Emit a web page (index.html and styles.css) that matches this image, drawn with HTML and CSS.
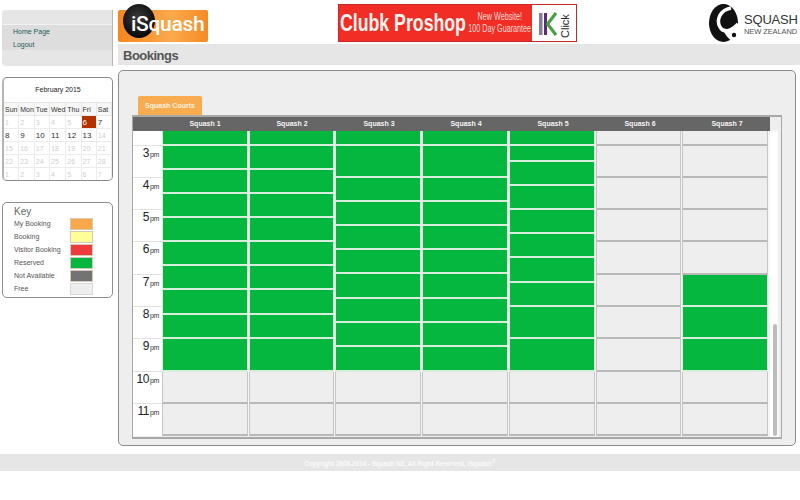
FILE: index.html
```html
<!DOCTYPE html>
<html lang="en">
<head>
<meta charset="utf-8">
<title>Bookings</title>
<link rel="stylesheet" href="styles.css">
</head>
<body>
<div class="layout">
  <aside class="sidebar">
    <nav class="nav">
      <div class="nav-links">
        <a class="nav-link" href="#">Home Page</a>
        <a class="nav-link" href="#">Logout</a>
      </div>
    </nav>
    <section class="calendar">
      <div class="cal-title">February 2015</div>
      <div class="cal-grid">
        <div class="cal-head">Sun</div><div class="cal-head">Mon</div><div class="cal-head">Tue</div><div class="cal-head">Wed</div><div class="cal-head">Thu</div><div class="cal-head">Fri</div><div class="cal-head">Sat</div>
        <div class="day off">1</div><div class="day off">2</div><div class="day off">3</div><div class="day off">4</div><div class="day off">5</div><div class="day today">6</div><div class="day">7</div>
        <div class="day">8</div><div class="day">9</div><div class="day">10</div><div class="day">11</div><div class="day">12</div><div class="day">13</div><div class="day off">14</div>
        <div class="day off">15</div><div class="day off">16</div><div class="day off">17</div><div class="day off">18</div><div class="day off">19</div><div class="day off">20</div><div class="day off">21</div>
        <div class="day off">22</div><div class="day off">23</div><div class="day off">24</div><div class="day off">25</div><div class="day off">26</div><div class="day off">27</div><div class="day off">28</div>
        <div class="day off">1</div><div class="day off">2</div><div class="day off">3</div><div class="day off">4</div><div class="day off">5</div><div class="day off">6</div><div class="day off">7</div>
      </div>
    </section>
    <section class="key">
      <h2 class="key-title">Key</h2>
      <div class="key-row"><span>My Booking</span><i class="swatch s-mine"></i></div>
      <div class="key-row"><span>Booking</span><i class="swatch s-booking"></i></div>
      <div class="key-row"><span>Visitor Booking</span><i class="swatch s-visitor"></i></div>
      <div class="key-row"><span>Reserved</span><i class="swatch s-reserved"></i></div>
      <div class="key-row"><span>Not Available</span><i class="swatch s-na"></i></div>
      <div class="key-row"><span>Free</span><i class="swatch s-free"></i></div>
    </section>
  </aside>

  <main class="content">
    <header class="topbar">
      <div class="isquash"><span class="isquash-ball"></span><span class="isquash-text">iSquash</span></div>
      <div class="banner">
        <div class="banner-name"><span>Clubk Proshop</span></div>
        <div class="banner-note"><span>New Website!</span><span>100 Day Guarantee</span></div>
        <svg class="banner-click" width="44" height="36" viewBox="0 0 44 36">
          <rect x="7" y="8" width="3.500" height="22" fill="#8a7a92"/>
          <rect x="12" y="8" width="3" height="22" fill="#5b2a78"/>
          <path d="M24 8 L15.500 19 L24 30" fill="none" stroke="#3fa33a" stroke-width="3"/>
          <text transform="translate(37 33) rotate(-90)" class="click-text">Click</text>
        </svg>
      </div>
      <div class="sq-logo">
        <svg width="30" height="38" viewBox="0 0 30 38">
          <ellipse cx="14.500" cy="19" rx="14.500" ry="19" fill="#111"/>
          <path d="M29 20 C24 26 18 28 14 26 C17 32 20 35 24 38 L30 38 L30 20 Z" fill="#fff"/>
          <path d="M22 4 C11 6 7 16 11 23 C14 29 22 28 29 20" fill="none" stroke="#fff" stroke-width="3.500"/>
          <circle cx="25" cy="31" r="2.200" fill="#111"/>
        </svg>
        <div class="sq-words"><span class="sq-main">SQUASH</span><span class="sq-sub">NEW ZEALAND</span></div>
      </div>
    </header>
    <h1 class="page-title">Bookings</h1>
    <section class="panel">
      <div class="tab">Squash Courts</div>
      <div class="board">
        <div class="board-head">
          <div class="head-spacer"></div>
          <div class="head-courts">
            <span>Squash 1</span><span>Squash 2</span><span>Squash 3</span><span>Squash 4</span><span>Squash 5</span><span>Squash 6</span><span>Squash 7</span>
          </div>
        </div>
        <div class="board-body">
          <div class="times">
            <div class="time h14"></div>
            <div class="time h32"><b>3</b>pm</div>
            <div class="time h32"><b>4</b>pm</div>
            <div class="time h32"><b>5</b>pm</div>
            <div class="time h33"><b>6</b>pm</div>
            <div class="time h32"><b>7</b>pm</div>
            <div class="time h32"><b>8</b>pm</div>
            <div class="time h33"><b>9</b>pm</div>
            <div class="time h32"><b>10</b>pm</div>
            <div class="time h32"><b>11</b>pm</div>
          </div>
          <div class="courts">
            <div class="court">
              <div class="slot busy h15"></div><div class="slot busy h24"></div><div class="slot busy h24"></div><div class="slot busy h24"></div><div class="slot busy h24"></div><div class="slot busy h24"></div><div class="slot busy h24"></div><div class="slot busy h25"></div><div class="slot busy h24"></div><div class="slot busy h33"></div><div class="slot free h32"></div><div class="slot free h32"></div>
            </div>
            <div class="court">
              <div class="slot busy h15"></div><div class="slot busy h24"></div><div class="slot busy h24"></div><div class="slot busy h24"></div><div class="slot busy h24"></div><div class="slot busy h24"></div><div class="slot busy h24"></div><div class="slot busy h25"></div><div class="slot busy h24"></div><div class="slot busy h33"></div><div class="slot free h32"></div><div class="slot free h32"></div>
            </div>
            <div class="court">
              <div class="slot busy h15"></div><div class="slot busy h32"></div><div class="slot busy h24"></div><div class="slot busy h24"></div><div class="slot busy h24"></div><div class="slot busy h24"></div><div class="slot busy h25"></div><div class="slot busy h24"></div><div class="slot busy h24"></div><div class="slot busy h25"></div><div class="slot free h32"></div><div class="slot free h32"></div>
            </div>
            <div class="court">
              <div class="slot busy h15"></div><div class="slot busy h32"></div><div class="slot busy h24"></div><div class="slot busy h24"></div><div class="slot busy h24"></div><div class="slot busy h24"></div><div class="slot busy h25"></div><div class="slot busy h24"></div><div class="slot busy h24"></div><div class="slot busy h25"></div><div class="slot free h32"></div><div class="slot free h32"></div>
            </div>
            <div class="court">
              <div class="slot busy h15"></div><div class="slot busy h16"></div><div class="slot busy h24"></div><div class="slot busy h24"></div><div class="slot busy h24"></div><div class="slot busy h24"></div><div class="slot busy h25"></div><div class="slot busy h24"></div><div class="slot busy h32"></div><div class="slot busy h33"></div><div class="slot free h32"></div><div class="slot free h32"></div>
            </div>
            <div class="court">
              <div class="slot free h15"></div><div class="slot free h32"></div><div class="slot free h32"></div><div class="slot free h32"></div><div class="slot free h33"></div><div class="slot free h32"></div><div class="slot free h32"></div><div class="slot free h33"></div><div class="slot free h32"></div><div class="slot free h32"></div>
            </div>
            <div class="court">
              <div class="slot free h15"></div><div class="slot free h32"></div><div class="slot free h32"></div><div class="slot free h32"></div><div class="slot free h33"></div><div class="slot busy h32"></div><div class="slot busy h32"></div><div class="slot busy h33"></div><div class="slot free h32"></div><div class="slot free h32"></div>
            </div>
          </div>
          <div class="scroll"><div class="thumb"></div></div>
        </div>
      </div>
    </section>
  </main>
</div>
<footer class="footer">Copyright 2008-2014 - Squash NZ, All Right Reserved, iSquash<sup>®</sup></footer>
</body>
</html>
```
FILE: styles.css
```css
* { box-sizing: border-box; }
html, body { margin: 0; padding: 0; }
body { width: 800px; height: 500px; overflow: hidden; background: #fff; font-family: "Liberation Sans", Arial, sans-serif; color: #333; }

.layout { display: flex; align-items: flex-start; }

/* sidebar */
.sidebar { width: 118px; flex: none; padding: 10px 5px 0 2px; }
.nav { height: 56px; padding-top: 14px; background: #e6e6e6; border-radius: 4px 0 0 4px; border-right: 1px solid #b5b5b5; }
.nav-links { height: 26px; border-top: 1px solid #f2f2f2; background: #dcdddc; padding: 3px 0 0 11px; display: flex; flex-direction: column; gap: 6px; }
.nav-link { font-size: 7px; line-height: 7px; color: #1f5a58; text-decoration: none; height: 7px; }

.calendar { height: 104px; margin-top: 11px; border: 1px solid #8a8a8a; border-left-width: 2px; border-left-color: #b5b5b5; border-radius: 5px; overflow: hidden; background: #fff; }
.cal-title { height: 25px; font-size: 7px; line-height: 24px; text-align: center; color: #222; border-bottom: 1px solid #e4e4e4; }
.cal-grid { display: grid; grid-template-columns: repeat(7, 1fr); grid-auto-rows: 13px; }
.cal-head { font-size: 7px; line-height: 13px; padding-left: 1px; color: #333; background: #f7f7f7; border-right: 1px solid #e6e6e6; border-bottom: 1px solid #e6e6e6; }
.day { font-size: 8px; line-height: 13px; padding-left: 1px; color: #333; border-right: 1px solid #ececec; border-bottom: 1px solid #ececec; }
.day.off { color: #cfcfcf; font-size: 7px; }
.day.today { background: #b43200; color: #fff; }

.key { height: 96px; margin-top: 21px; border: 1px solid #8f8f8f; border-radius: 5px; padding: 3px 19px 0 11px; }
.key-title { margin: 0; font-size: 10px; line-height: 12px; height: 11px; font-weight: normal; color: #666; }
.key-row { display: flex; justify-content: space-between; align-items: center; height: 13px; font-size: 7px; color: #555; }
.swatch { display: block; width: 23px; height: 12px; border: 1px solid #d6c9b5; }
.s-mine { background: #f9a94b; }
.s-booking { background: #ffff99; }
.s-visitor { background: #ee3b3e; }
.s-reserved { background: #06b73f; }
.s-na { background: #737373; }
.s-free { background: #eeeeee; border-color: #d8d8d8; }

/* top */
.content { flex: 1; min-width: 0; }
.topbar { height: 44px; display: flex; align-items: flex-start; }
.isquash { position: relative; width: 90px; height: 32px; margin-top: 10px; border-radius: 2px; background: linear-gradient(90deg, #f5861f 0%, #fba94c 60%, #f58a24 100%); }
.isquash-ball { position: absolute; left: 5px; top: -6px; width: 32px; height: 34px; border-radius: 50%; background: radial-gradient(circle at 45% 40%, #3a3a3a, #0b0b0b 70%); }
.isquash-text { position: absolute; left: 13px; top: 1px; font-family: Roboto, sans-serif; font-size: 21px; font-weight: 500; line-height: 26px; color: #fff; letter-spacing: -0.3px; }
.banner { width: 239px; height: 38px; margin: 4px 0 0 130px; display: flex; align-items: center; background: #f12d26; border: 1px solid #c8262a; }
.banner-name { width: 129px; flex: none; padding-left: 1px; font-weight: bold; font-size: 23px; color: #fdf4ef; white-space: nowrap; }
.banner-name span { display: inline-block; transform: scaleX(0.77); transform-origin: left center; }
.banner-note { width: 64px; flex: none; display: flex; flex-direction: column; align-items: center; font-size: 10px; line-height: 12px; color: #fbdcd3; white-space: nowrap; }
.banner-note span { display: block; transform: scaleX(0.72); }
.banner-click { margin-left: auto; background: #fff; display: block; flex: none; }
.click-text { font-family: "Liberation Sans", sans-serif; font-size: 11px; fill: #222; }
.sq-logo { margin: 4px 3px 0 auto; display: flex; align-items: flex-start; gap: 5px; }
.sq-words { display: flex; flex-direction: column; padding-top: 9px; width: 53px; }
.sq-main { font-size: 13px; line-height: 14px; color: #333; letter-spacing: -0.2px; white-space: nowrap; }
.sq-sub { font-size: 7.500px; line-height: 9px; color: #555; letter-spacing: -0.1px; white-space: nowrap; }

.page-title { margin: 0; height: 21px; padding-left: 5px; background: #e6e6e6; font-size: 13px; line-height: 23px; font-weight: bold; color: #555; letter-spacing: -0.5px; }

/* panel */
.panel { height: 376px; margin: 5px 4px 0 0; padding: 25px 13px 0; background: #eeeeee; border: 1px solid #8c8c8c; border-radius: 5px; }
.tab { width: 64px; height: 19px; margin-left: 6px; background: #f9ab50; border-radius: 2px 2px 0 0; font-size: 7px; line-height: 19px; font-weight: bold; text-align: center; color: #fdf3e2; white-space: nowrap; }
.board { height: 324px; border: 1px solid #a8a8a8; border-top-width: 2px; border-bottom-width: 2px; }
.board-head { display: flex; width: 637px; height: 14px; background: #666; }
.head-spacer { width: 29px; flex: none; }
.head-courts { flex: 1; display: grid; grid-template-columns: repeat(7, 1fr); column-gap: 1px; }
.head-courts span { font-size: 7px; line-height: 14px; font-weight: bold; color: #f4f4f4; text-align: center; }
.board-body { display: flex; height: 306px; }
.times { width: 29px; flex: none; height: 305px; background: #fff; }
.time { text-align: right; padding: 0 3px 0 0; border-top: 1px solid #e2e2e2; font-size: 7px; line-height: 14px; color: #333; letter-spacing: -0.3px; }
.time:first-child { border-top: 0; }
.time b { font-size: 12px; font-weight: normal; color: #222; letter-spacing: -0.5px; margin-right: 1px; }
.courts { width: 608px; flex: none; padding-right: 2px; display: grid; grid-template-columns: repeat(7, 1fr); column-gap: 1px; align-content: start; height: 305px; background: #f6f6f6; }
.court { display: flex; flex-direction: column; }
.slot { border-style: solid; border-width: 0 1px 2px; }
.slot.busy { background: #06b73f; border-color: #d6eedb; }
.slot.free { background: #eeeeee; border-color: #c6c6c6; border-bottom-color: #b9b9b9; }
.h14 { height: 14px; }
.h15 { height: 15px; }
.h16 { height: 16px; }
.h24 { height: 24px; }
.h25 { height: 25px; }
.h32 { height: 32px; }
.h33 { height: 33px; }
.scroll { flex: 1; display: flex; flex-direction: column; justify-content: flex-end; padding: 0 0 1px 3px; background: linear-gradient(90deg, #fff 0, #fff 60%, #eee 85%); }
.thumb { width: 4px; height: 112px; border-radius: 2px; background: #bcbcbc; }

.footer { margin-top: 8px; height: 17px; background: #e6e6e6; font-size: 6.300px; line-height: 19px; font-weight: bold; text-align: center; color: #fafafa; }
.footer sup { font-size: 5px; line-height: 0; }
```
